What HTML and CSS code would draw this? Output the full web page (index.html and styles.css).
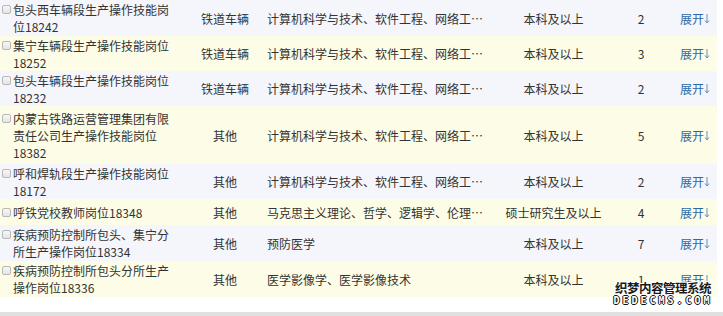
FILE: index.html
```html
<!DOCTYPE html>
<html lang="zh-CN">
<head>
<meta charset="utf-8">
<title>岗位列表</title>
<link rel="stylesheet" href="styles.css">
</head>
<body>
<table class="jobs">
  <colgroup>
    <col class="w1"><col class="w2"><col class="w3"><col class="w4"><col class="w5"><col class="w6">
  </colgroup>
  <tbody>
    <tr class="blue h36">
      <td class="c-name"><div class="name"><span class="cb"></span><span class="nt">包头西车辆段生产操作技能岗位18242</span></div></td>
      <td class="c-mid">铁道车辆</td>
      <td class="c-major"><div class="ell">计算机科学与技术、软件工程、网络工程、通信工程</div></td>
      <td class="c-mid">本科及以上</td>
      <td class="c-mid">2</td>
      <td class="c-act"><a class="open">展开<svg class="arr" width="6" height="11" viewBox="0 0 6 11"><path d="M3 1V10M1 7.5L3 10L5 7.5" fill="none" stroke="#6b8fb5" stroke-width="1"/></svg></a></td>
    </tr>
    <tr class="yellow h35">
      <td class="c-name"><div class="name"><span class="cb"></span><span class="nt">集宁车辆段生产操作技能岗位18252</span></div></td>
      <td class="c-mid">铁道车辆</td>
      <td class="c-major"><div class="ell">计算机科学与技术、软件工程、网络工程、通信工程</div></td>
      <td class="c-mid">本科及以上</td>
      <td class="c-mid">3</td>
      <td class="c-act"><a class="open">展开<svg class="arr" width="6" height="11" viewBox="0 0 6 11"><path d="M3 1V10M1 7.5L3 10L5 7.5" fill="none" stroke="#6b8fb5" stroke-width="1"/></svg></a></td>
    </tr>
    <tr class="blue h35">
      <td class="c-name"><div class="name"><span class="cb"></span><span class="nt">包头车辆段生产操作技能岗位18232</span></div></td>
      <td class="c-mid">铁道车辆</td>
      <td class="c-major"><div class="ell">计算机科学与技术、软件工程、网络工程、通信工程</div></td>
      <td class="c-mid">本科及以上</td>
      <td class="c-mid">2</td>
      <td class="c-act"><a class="open">展开<svg class="arr" width="6" height="11" viewBox="0 0 6 11"><path d="M3 1V10M1 7.5L3 10L5 7.5" fill="none" stroke="#6b8fb5" stroke-width="1"/></svg></a></td>
    </tr>
    <tr class="yellow h58">
      <td class="c-name"><div class="name"><span class="cb"></span><span class="nt">内蒙古铁路运营管理集团有限责任公司生产操作技能岗位18382</span></div></td>
      <td class="c-mid">其他</td>
      <td class="c-major"><div class="ell">计算机科学与技术、软件工程、网络工程、通信工程</div></td>
      <td class="c-mid">本科及以上</td>
      <td class="c-mid">5</td>
      <td class="c-act"><a class="open">展开<svg class="arr" width="6" height="11" viewBox="0 0 6 11"><path d="M3 1V10M1 7.5L3 10L5 7.5" fill="none" stroke="#6b8fb5" stroke-width="1"/></svg></a></td>
    </tr>
    <tr class="blue h35">
      <td class="c-name"><div class="name"><span class="cb"></span><span class="nt">呼和焊轨段生产操作技能岗位18172</span></div></td>
      <td class="c-mid">其他</td>
      <td class="c-major"><div class="ell">计算机科学与技术、软件工程、网络工程、通信工程</div></td>
      <td class="c-mid">本科及以上</td>
      <td class="c-mid">2</td>
      <td class="c-act"><a class="open">展开<svg class="arr" width="6" height="11" viewBox="0 0 6 11"><path d="M3 1V10M1 7.5L3 10L5 7.5" fill="none" stroke="#6b8fb5" stroke-width="1"/></svg></a></td>
    </tr>
    <tr class="yellow h26">
      <td class="c-name"><div class="name"><span class="cb"></span><span class="nt">呼铁党校教师岗位18348</span></div></td>
      <td class="c-mid">其他</td>
      <td class="c-major"><div class="ell">马克思主义理论、哲学、逻辑学、伦理学、政治学</div></td>
      <td class="c-mid">硕士研究生及以上</td>
      <td class="c-mid">4</td>
      <td class="c-act"><a class="open">展开<svg class="arr" width="6" height="11" viewBox="0 0 6 11"><path d="M3 1V10M1 7.5L3 10L5 7.5" fill="none" stroke="#6b8fb5" stroke-width="1"/></svg></a></td>
    </tr>
    <tr class="blue h36">
      <td class="c-name"><div class="name"><span class="cb"></span><span class="nt">疾病预防控制所包头、集宁分所生产操作岗位18334</span></div></td>
      <td class="c-mid">其他</td>
      <td class="c-major"><div class="ell">预防医学</div></td>
      <td class="c-mid">本科及以上</td>
      <td class="c-mid">7</td>
      <td class="c-act"><a class="open">展开<svg class="arr" width="6" height="11" viewBox="0 0 6 11"><path d="M3 1V10M1 7.5L3 10L5 7.5" fill="none" stroke="#6b8fb5" stroke-width="1"/></svg></a></td>
    </tr>
    <tr class="yellow h36">
      <td class="c-name"><div class="name"><span class="cb"></span><span class="nt">疾病预防控制所包头分所生产操作岗位18336</span></div></td>
      <td class="c-mid">其他</td>
      <td class="c-major"><div class="ell">医学影像学、医学影像技术</div></td>
      <td class="c-mid">本科及以上</td>
      <td class="c-mid">1</td>
      <td class="c-act"><a class="open">展开<svg class="arr" width="6" height="11" viewBox="0 0 6 11"><path d="M3 1V10M1 7.5L3 10L5 7.5" fill="none" stroke="#6b8fb5" stroke-width="1"/></svg></a></td>
    </tr>
  </tbody>
</table>
<div class="bottom-bar"></div>
<div class="watermark">
  <div class="wm-cn">织梦内容管理系统</div>
  <div class="wm-en">DEDECMS.COM</div>
</div>
</body>
</html>
```

FILE: styles.css
```css
html, body {
  margin: 0;
  padding: 0;
  background: #ffffff;
}
body {
  width: 723px;
  height: 316px;
  overflow: hidden;
  position: relative;
  font-family: "Microsoft YaHei", "Noto Sans CJK SC", sans-serif;
  font-size: 12px;
  color: #333333;
}
.jobs {
  width: 717px;
  table-layout: fixed;
  border-collapse: collapse;
  border-spacing: 0;
}
.w1 { width: 185px; }
.w2 { width: 80px; }
.w3 { width: 222px; }
.w4 { width: 133px; }
.w5 { width: 42px; }
.w6 { width: 55px; }

.jobs td {
  padding: 0;
  line-height: 17px;
  vertical-align: middle;
}
.blue { background: #f4f6fb; }
.yellow { background: #fdfde7; }
.h26 td { height: 26px; }
.h35 td { height: 35px; }
.h36 td { height: 36px; }
.h58 td { height: 58px; }

.jobs .c-name { padding-right: 12px; }
.name {
  display: flex;
  align-items: flex-start;
}
.cb {
  flex: none;
  width: 7px;
  height: 7px;
  margin: 4px 2px 0 2px;
  border: 1px solid #b8b8b8;
  border-radius: 2px;
  background: linear-gradient(#f7f7f7, #e4e4e4);
}
.nt {
  flex: 1;
  min-width: 0;
}
.c-mid { text-align: center; }
.jobs .c-major {
  padding-left: 2px;
  padding-right: 0;
}
.ell {
  white-space: nowrap;
  overflow: hidden;
  text-overflow: ellipsis;
}
.jobs .c-act { padding-left: 18px; }
.open {
  display: inline-flex;
  align-items: center;
  color: #2f6aa6;
  text-decoration: none;
  cursor: pointer;
}
.arr {
  display: block;
  margin-left: 0;
}
.bottom-bar {
  margin-top: 15px;
  height: 4px;
  background: #e0e0e0;
}
.watermark {
  position: absolute;
  left: 612px;
  top: 281px;
  width: 102px;
  text-align: center;
}
.wm-cn {
  font-weight: bold;
  font-size: 12.5px;
  line-height: 14px;
  letter-spacing: -0.5px;
  color: #1a1a1a;
  text-shadow: 1px 0 #fff, -1px 0 #fff, 0 1px #fff, 0 -1px #fff, 1px 1px #fff, -1px -1px #fff, 1px -1px #fff, -1px 1px #fff;
}
.wm-en {
  font-family: "DejaVu Sans Mono", monospace;
  font-weight: bold;
  font-size: 10px;
  line-height: 11px;
  letter-spacing: 3px;
  color: #ffffff;
  text-shadow: 1px 0 #111, -1px 0 #111, 0 1px #111, 0 -1px #111;
}
```
